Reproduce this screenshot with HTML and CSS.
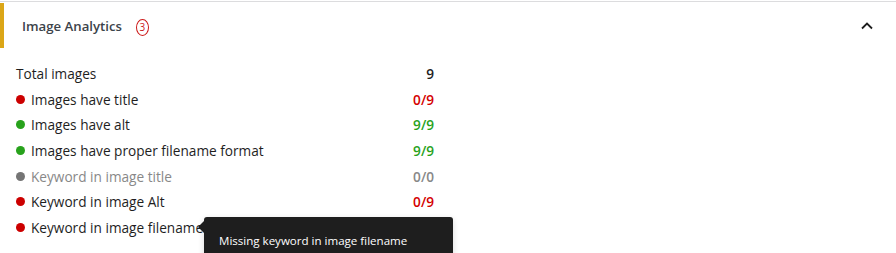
FILE: index.html
```html
<!DOCTYPE html>
<html lang="en">
<head>
	<meta charset="UTF-8">
	<title>Image Analytics</title>
	<link rel="stylesheet" href="styles.css">
</head>
<body>
	<div class="panel">
		<div class="panel-head">
			<span class="panel-title">Image Analytics</span>
			<span class="badge">3</span>
			<svg class="chevron" width="14" height="10" viewBox="0 0 14 10">
				<path d="M2 7.5 L7 2.5 L12 7.5" fill="none" stroke="#1e1e1e" stroke-width="1.8"/>
			</svg>
		</div>
		<div class="panel-body">
			<ul class="stats">
				<li class="stat">
					<span class="label">Total images</span>
					<span class="value">9</span>
				</li>
				<li class="stat bad">
					<span class="label"><i class="dot"></i>Images have title</span>
					<span class="value">0/9</span>
				</li>
				<li class="stat good">
					<span class="label"><i class="dot"></i>Images have alt</span>
					<span class="value">9/9</span>
				</li>
				<li class="stat good">
					<span class="label"><i class="dot"></i>Images have proper filename format</span>
					<span class="value">9/9</span>
				</li>
				<li class="stat off">
					<span class="label"><i class="dot"></i>Keyword in image title</span>
					<span class="value">0/0</span>
				</li>
				<li class="stat bad">
					<span class="label"><i class="dot"></i>Keyword in image Alt</span>
					<span class="value">0/9</span>
				</li>
				<li class="stat bad has-tip">
					<span class="label"><i class="dot"></i>Keyword in image filename</span>
					<span class="value">0/9</span>
					<div class="tooltip">Missing keyword in image filename</div>
				</li>
			</ul>
		</div>
	</div>
</body>
</html>
```

FILE: styles.css
```css
body {
	margin: 0;
	font-family: "Open Sans", "Liberation Sans", sans-serif;
	color: #1e1e1e;
	background: #fff;
	overflow: hidden;
}

.panel {
	margin-top: 1px;
	border-top: 1px solid #dcdcde;
}

.panel-head {
	display: flex;
	align-items: center;
	height: 45px;
	margin-top: 1px;
	padding: 0 22px 0 18px;
	border-left: 4px solid #dba617;
}
.panel-title {
	font-size: 13.2px;
	font-weight: 600;
	color: #3c434a;
}
.badge {
	/* red outlined counter */
	display: inline-flex;
	justify-content: center;
	align-items: center;
	width: 11px;
	height: 15px;
	margin-left: 14px;
	margin-top: 3px;
	border: 1px solid #cc1818;
	border-radius: 50%;
	font-size: 10px;
	color: #cc1818;
}
.chevron {
	margin-left: auto;
}

.panel-body {
	padding: 13px 16px;
}
.stats {
	list-style: none;
	margin: 0;
	padding: 0;
	width: 418px;
}
.stat {
	position: relative;
	display: flex;
	justify-content: space-between;
	align-items: center;
	height: 25.6px;
	font-size: 13.65px;
	font-weight: 500;
}
.label {
	display: flex;
	align-items: center;
}
.dot {
	width: 9px;
	height: 9px;
	margin-right: 6px;
	border-radius: 50%;
	background: #777;
}
.value {
	font-weight: 600;
}
.bad .dot { background: #cc0000; }
.bad .value { color: #d40000; }
.good .dot { background: #28a21c; }
.good .value { color: #28a21c; }
.off { color: #888; }
.off .dot { background: #757575; }
.off .value { color: #888; }

.tooltip {
	position: absolute;
	left: 188px;
	top: 2px;
	width: 219px;
	padding: 16px 15px 20px;
	background: #1e1e1e;
	border-radius: 3px;
	box-shadow: 0 2px 6px rgba(0,0,0,0.15);
	color: #fff;
	font-size: 11.55px;
	font-weight: 400;
	white-space: nowrap;
}
.tooltip::before {
	content: "";
	position: absolute;
	left: -6px;
	top: 4px;
	border: 6px solid transparent;
	border-left: 0;
	border-right-color: #1e1e1e;
}
```
